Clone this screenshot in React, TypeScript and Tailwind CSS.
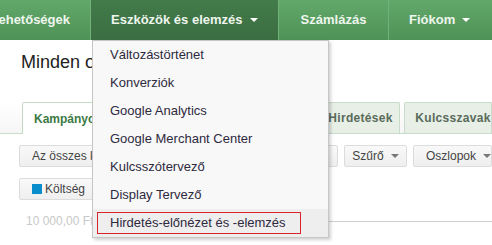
import React from "react";

const menuItems = [
  "Változástörténet",
  "Konverziók",
  "Google Analytics",
  "Google Merchant Center",
  "Kulcsszótervező",
  "Display Tervező",
];

const Caret = ({ color = "#ffffff" }: { color?: string }) => (
  <svg width="8" height="4" viewBox="0 0 8 4" className="ml-[7px] shrink-0">
    <path d="M0 0h8L4 4z" fill={color} />
  </svg>
);

const Button = ({
  children,
  className = "",
}: {
  children: React.ReactNode;
  className?: string;
}) => (
  <div
    className={`h-[22px] flex items-center rounded-[2px] border border-[#dcdcdc] bg-gradient-to-b from-[#f9f9f9] to-[#efefef] text-[12px] text-[#444] ${className}`}
  >
    {children}
  </div>
);

const App = () => {
  return (
    <div className="relative w-[492px] h-[245px] overflow-hidden bg-white font-['Liberation_Sans',Arial,sans-serif]">
      {/* top nav */}
      <div className="flex h-[40px] text-[13px] font-bold text-[#eef6ee]">
        <div className="w-[91px] flex items-center justify-end pr-[20px] overflow-hidden whitespace-nowrap border-r border-[#72b179] bg-gradient-to-b from-[#62a86a] to-[#4f9257]">
          Lehetőségek
        </div>
        <div className="w-[188px] flex items-center pl-[20px] border-r border-[#72b179] bg-gradient-to-b from-[#437b4a] to-[#3b6e42]">
          Eszközök és elemzés
          <Caret />
        </div>
        <div className="w-[110px] flex items-center justify-center border-r border-[#72b179] bg-gradient-to-b from-[#62a86a] to-[#4f9257]">
          Számlázás
        </div>
        <div className="flex-1 flex items-center pl-[20px] bg-gradient-to-b from-[#62a86a] to-[#4f9257]">
          Fiókom
          <Caret />
        </div>
      </div>

      {/* page content */}
      <div className="pl-[19px] pt-[10px]">
        <div className="text-[18px] leading-[24px] text-[#222] whitespace-nowrap pl-[2px]">
          Minden online kampány
        </div>
      </div>

      {/* tabs */}
      <div className="mt-[28px] h-[32px] flex items-end gap-[4px] pl-[22px] border-b border-[#c9dcc9] bg-gradient-to-b from-white to-[#f6f6f6] text-[12px] font-bold">
        <div className="w-[104px] h-[32px] -mb-px flex items-center pl-[11px] bg-white border border-b-0 border-[#c3dac3] rounded-t-[2px] text-[#3c7a44]">
          Kampányok
        </div>
        <div className="w-[111px] h-[31px] flex items-center justify-center bg-[#e7efe7] border border-b-0 border-[#c9dcc9] rounded-t-[2px] text-[#5a6b5a]">
          Hirdetéscsop.
        </div>
        <div className="w-[80px] h-[31px] flex items-center justify-center bg-[#e7efe7] border border-b-0 border-[#c9dcc9] rounded-t-[2px] text-[#5a6b5a]">
          Beállítások
        </div>
        <div className="w-[82px] h-[31px] flex items-center justify-center bg-[#e7efe7] border border-b-0 border-[#c9dcc9] rounded-t-[2px] text-[#5a6b5a] tracking-[0.3px]">
          Hirdetések
        </div>
        <div className="w-[90px] h-[31px] flex items-center pl-[10px] bg-[#e7efe7] border border-b-0 border-[#c9dcc9] rounded-t-[2px] text-[#5a6b5a] tracking-[0.3px] whitespace-nowrap">
          Kulcsszavak
        </div>
      </div>

      {/* toolbar */}
      <div className="pl-[19px] mt-[11px] flex gap-[6px]">
        <Button className="w-[150px] pl-[12px]">Az összes kampány</Button>
        <Button className="w-[168px] justify-end pr-[11px]">
          Szegmens
          <Caret color="#777" />
        </Button>
        <Button className="w-[64px] justify-center">
          Szűrő
          <Caret color="#777" />
        </Button>
        <Button className="w-[80px] pl-[12px]">
          Oszlopok
          <Caret color="#777" />
        </Button>
      </div>

      <div className="pl-[19px] mt-[11px] flex">
        <Button className="w-[90px] pl-[12px]">
          <span className="w-[10px] h-[10px] bg-[#0b8fcc] mr-[3px]" />
          Költség
          <Caret color="#777" />
        </Button>
      </div>

      {/* chart axis */}
      <div className="mt-[14px] pl-[26px] flex items-center h-[14px]">
        <span className="text-[12px] text-[#c9c9c9] whitespace-nowrap">
          10 000,00 Ft -
        </span>
        <div className="flex-1 h-px bg-[#cfcfcf] ml-[2px]" />
      </div>

      {/* dropdown menu */}
      <div className="absolute left-[92px] top-[40px] w-[237px] border border-[#c6c6c6] bg-[#f8f8f8] shadow-[2px_2px_3px_rgba(0,0,0,0.18)] text-[13px] text-[#2e2a40]">
        {menuItems.map((item) => (
          <div key={item} className="h-[28px] flex items-center pl-[17px]">
            {item}
          </div>
        ))}
        <div className="h-[28px] flex items-center pl-[4px] bg-[#eeeeee]">
          <div className="w-[204px] h-[22px] flex items-center pl-[12px] border border-[#d9232b]">
            Hirdetés-előnézet és -elemzés
          </div>
        </div>
      </div>
    </div>
  );
};

export default App;
